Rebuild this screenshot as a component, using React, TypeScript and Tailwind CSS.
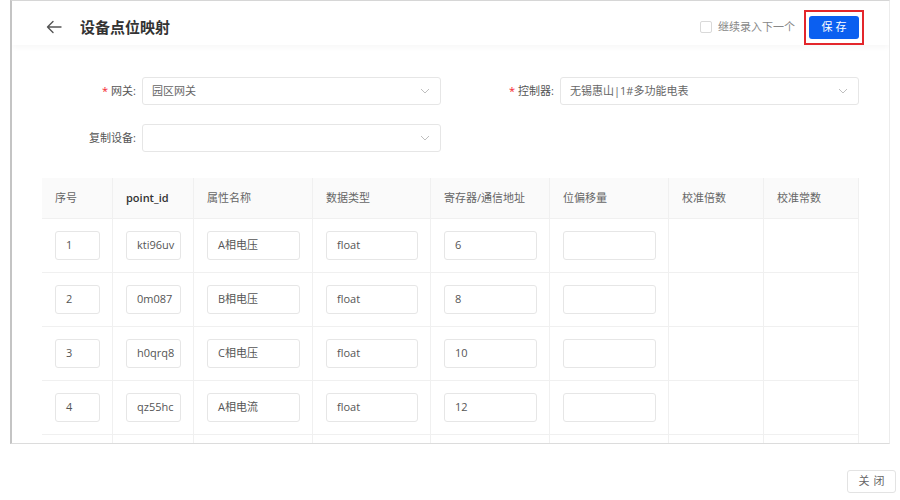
import React from "react";

const cols = "grid-cols-[71px_81px_119px_118px_119px_119px_95px_95px]";

function Chevron() {
  return (
    <svg width="12" height="12" viewBox="0 0 12 12" fill="none" className="text-[#bfbfbf]">
      <path d="M2 4l4 4 4-4" stroke="currentColor" strokeWidth="1" />
    </svg>
  );
}

function Select({ value }: { value?: string }) {
  return (
    <div className="w-[299px] h-[28px] border border-[#e6e6e6] rounded-[3px] bg-white flex items-center justify-between pl-[9px] pr-[9px]">
      <span className="text-[11px] text-[#666]">{value ?? ""}</span>
      <Chevron />
    </div>
  );
}

function Cell({ children }: { children?: React.ReactNode }) {
  return (
    <div className="h-[54px] border-b border-r border-[#f0f0f0] flex items-center pl-[13px] pr-[12px]">
      {children}
    </div>
  );
}

function Inp({ v }: { v?: string }) {
  return (
    <div className="w-full h-[29px] border border-[#e6e6e6] rounded-[3px] bg-white flex items-center pl-[10px] overflow-hidden whitespace-nowrap">
      <span className="text-[11px] text-[#555]">{v ?? ""}</span>
    </div>
  );
}

const rows = [
  ["1", "kti96uv", "A相电压", "float", "6"],
  ["2", "0m087", "B相电压", "float", "8"],
  ["3", "h0qrq8", "C相电压", "float", "10"],
  ["4", "qz55hc", "A相电流", "float", "12"],
  ["", "", "", "", ""],
];

const headers = ["序号", "point_id", "属性名称", "数据类型", "寄存器/通信地址", "位偏移量", "校准倍数", "校准常数"];

export default function App() {
  return (
    <div
      className="w-[900px] h-[500px] bg-white relative overflow-hidden"
      style={{ fontFamily: '"Open Sans", "Noto Sans CJK SC", sans-serif' }}
    >
      <div className="ml-[10px] w-[880px] h-[444px] border-l-2 border-l-[#c4c4c4] border-t border-t-[#d6d6d6] border-r border-r-[#ececec] border-b border-b-[#dcdcdc] flex flex-col overflow-hidden bg-white">
        {/* header */}
        <div className="h-[44px] shrink-0 flex items-center pt-[8px] pl-[33px] pr-[25px] bg-white shadow-[0_2px_6px_rgba(0,0,0,0.04)] relative z-10">
          <svg width="18" height="18" viewBox="0 0 18 18" fill="none" className="text-[#555]">
            <path d="M16 9H2.5M8 3.5L2.5 9 8 14.5" stroke="currentColor" strokeWidth="1.4" strokeLinecap="round" strokeLinejoin="round" />
          </svg>
          <span className="ml-[17px] text-[15px] font-bold text-[#333]">设备点位映射</span>
          <div className="flex-1" />
          <div className="w-[12px] h-[12px] border border-[#d9d9d9] rounded-[2px] bg-white" />
          <span className="ml-[6px] text-[11px] text-[#888]">继续录入下一个</span>
          <div className="ml-[9px] border-2 border-[#e3262b] px-[3px] py-[4px] flex">
            <button className="w-[50px] h-[23px] bg-[#0b5ff0] rounded-[3px] text-white text-[11px] tracking-[3px] pl-[3px]">
              保存
            </button>
          </div>
        </div>
        {/* body */}
        <div className="flex-1 pl-[30px] pr-[19px] pt-[32px] bg-white">
          <div className="grid grid-cols-[399px_418px] gap-y-[19px]">
            <div className="flex items-center">
              <div className="w-[100px] pr-[6px] text-right text-[11px] text-[#555]">
                <span className="text-[#f5222d] mr-[3px]">*</span>网关:
              </div>
              <Select value="园区网关" />
            </div>
            <div className="flex items-center">
              <div className="w-[119px] pr-[6px] text-right text-[11px] text-[#555]">
                <span className="text-[#f5222d] mr-[3px]">*</span>控制器:
              </div>
              <Select value="无锡惠山|1#多功能电表" />
            </div>
            <div className="flex items-center">
              <div className="w-[100px] pr-[6px] text-right text-[11px] text-[#555]">复制设备:</div>
              <Select />
            </div>
          </div>
          {/* table */}
          <div className="mt-[26px] w-[817px]">
            <div className={"grid " + cols + " bg-[#fafafa]"}>
              {headers.map((h, i) => (
                <div
                  key={h}
                  className={
                    "h-[41px] border-b border-r border-[#f0f0f0] flex items-center pl-[13px] text-[11px] " +
                    (i === 1 ? "text-[#333] font-semibold" : "text-[#666]")
                  }
                >
                  {h}
                </div>
              ))}
            </div>
            {rows.map((r, idx) => (
              <div key={idx} className={"grid " + cols}>
                {idx < 4 ? (
                  <>
                    <Cell><Inp v={r[0]} /></Cell>
                    <Cell><Inp v={r[1]} /></Cell>
                    <Cell><Inp v={r[2]} /></Cell>
                    <Cell><Inp v={r[3]} /></Cell>
                    <Cell><Inp v={r[4]} /></Cell>
                    <Cell><Inp /></Cell>
                    <Cell />
                    <Cell />
                  </>
                ) : (
                  <>
                    <Cell /><Cell /><Cell /><Cell /><Cell /><Cell /><Cell /><Cell />
                  </>
                )}
              </div>
            ))}
          </div>
        </div>
      </div>
      <div className="flex justify-end pr-[4px] pt-[26px]">
        <button className="w-[49px] h-[23px] border border-[#e3e3e3] rounded-[3px] bg-white text-[11px] text-[#666] tracking-[4px] pl-[4px]">
          关闭
        </button>
      </div>
    </div>
  );
}
